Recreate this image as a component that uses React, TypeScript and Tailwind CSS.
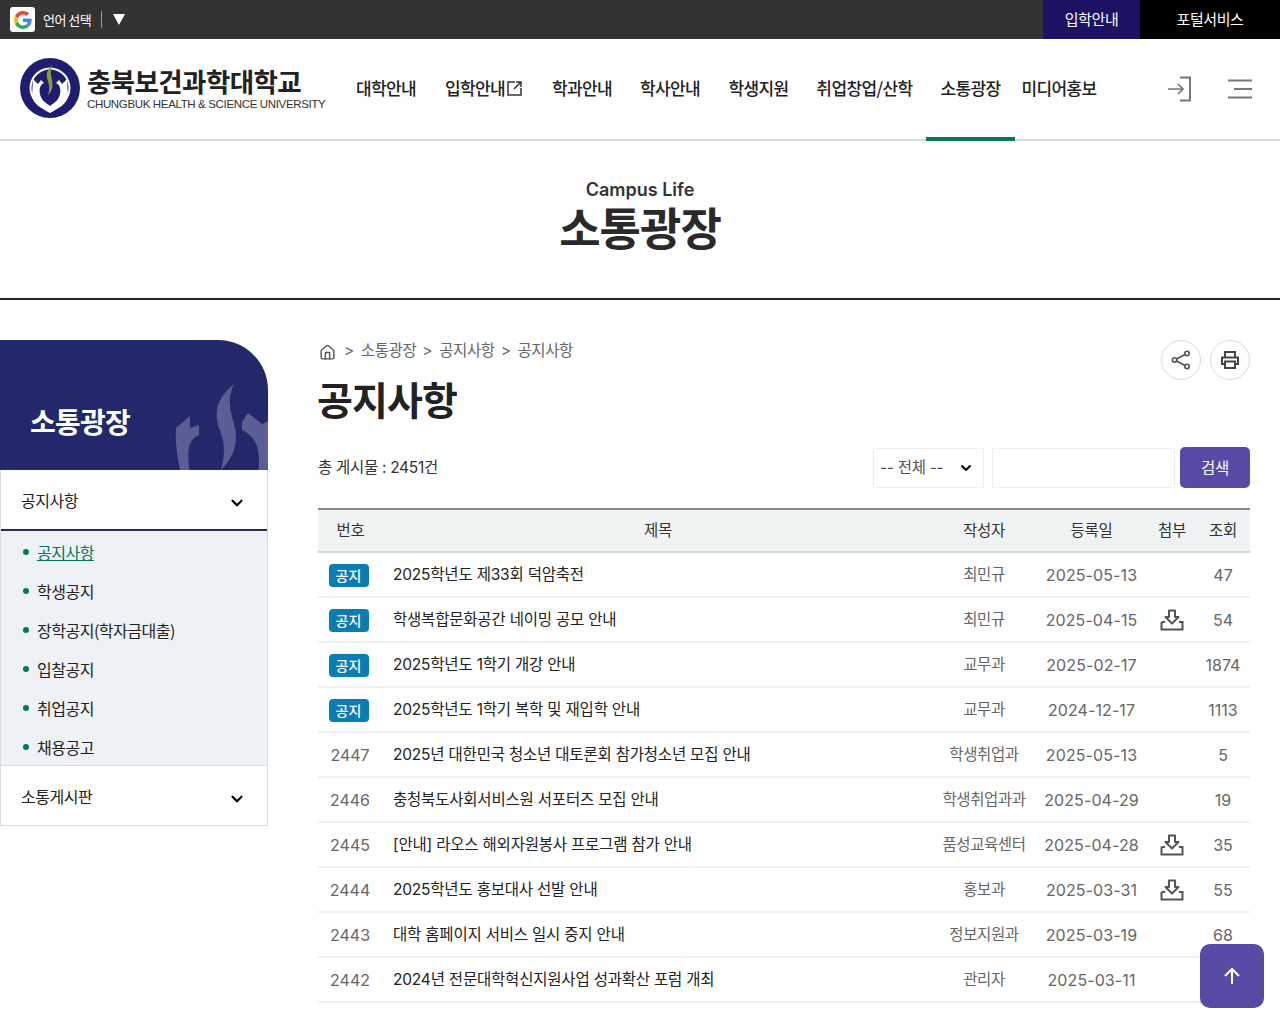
import React from "react";
import { Home, ChevronDown } from "lucide-react";

const font = "font-['Inter','Noto_Sans_CJK_KR',sans-serif]";
const cjk = "font-['Noto_Sans_CJK_KR',sans-serif]";

const nav = [
  { t: "대학안내", w: "w-[88px]" },
  { t: "입학안내", w: "w-[108px]", ext: true },
  { t: "학과안내", w: "w-[88px]" },
  { t: "학사안내", w: "w-[88px]" },
  { t: "학생지원", w: "w-[89px]" },
  { t: "취업창업/산학", w: "w-[123px]" },
  { t: "소통광장", w: "w-[89px]", active: true },
  { t: "미디어홍보", w: "w-[88px]" },
];

const subs = ["공지사항", "학생공지", "장학공지(학자금대출)", "입찰공지", "취업공지", "채용공고"];

const rows: [string, string, string, string, boolean, string][] = [
  ["공지", "2025학년도 제33회 덕암축전", "최민규", "2025-05-13", false, "47"],
  ["공지", "학생복합문화공간 네이밍 공모 안내", "최민규", "2025-04-15", true, "54"],
  ["공지", "2025학년도 1학기 개강 안내", "교무과", "2025-02-17", false, "1874"],
  ["공지", "2025학년도 1학기 복학 및 재입학 안내", "교무과", "2024-12-17", false, "1113"],
  ["2447", "2025년 대한민국 청소년 대토론회 참가청소년 모집 안내", "학생취업과", "2025-05-13", false, "5"],
  ["2446", "충청북도사회서비스원 서포터즈 모집 안내", "학생취업과과", "2025-04-29", false, "19"],
  ["2445", "[안내] 라오스 해외자원봉사 프로그램 참가 안내", "품성교육센터", "2025-04-28", true, "35"],
  ["2444", "2025학년도 홍보대사 선발 안내", "홍보과", "2025-03-31", true, "55"],
  ["2443", "대학 홈페이지 서비스 일시 중지 안내", "정보지원과", "2025-03-19", false, "68"],
  ["2442", "2024년 전문대학혁신지원사업 성과확산 포럼 개최", "관리자", "2025-03-11", false, ""],
];

function Emblem() {
  return (
    <svg width="62" height="62" viewBox="0 0 62 62" className="shrink-0">
      <circle cx="31" cy="31" r="30" fill="#1f1d70" />
      <circle cx="31" cy="31" r="20.5" fill="#fff" />
      <circle cx="31" cy="31" r="18.5" fill="#1f1d70" />
      <path d="M14 22l5 5 3-4 3 3c-4 2-5 6-4 11 1 6 6 9 10 12 4-3 9-6 10-12 1-5 0-9-4-11l3-3 3 4 5-5 1 17c-1 8-9 12-18 17-9-5-17-9-18-17z" fill="#fff" />
      <path d="M24 30c-2 5-1 9 7 14 8-5 9-9 7-14 4 4 3 10-7 16-10-6-11-12-7-16z" fill="#1f1d70" />
      <path d="M33 8c-6 6-6 11-4 16 1 4 2 8 0 14 5-5 5-10 4-15-1-5-2-9 0-15z" fill="#8a9a3a" />
      <text x="31" y="42" textAnchor="middle" fontSize="5.5" fontWeight="700" fill="#1f1d70" fontFamily="'Liberation Sans',sans-serif">CHSU</text>
    </svg>
  );
}

function DownloadIcon() {
  return (
    <svg width="24" height="22" viewBox="0 0 24 22" fill="none" stroke="#555" strokeWidth="2" className="mx-auto">
      <path d="M9 1.5h6v6.5h3.5L12 14.500 5.500 8H9z" strokeLinejoin="round" />
      <path d="M1.500 13v7.500h21V13h-3.500M5 13H1.500" />
    </svg>
  );
}

function GoogleG() {
  return (
    <svg width="18" height="18" viewBox="0 0 48 48">
      <path fill="#EA4335" d="M24 9.500c3.500 0 6.700 1.200 9.200 3.600l6.900-6.900C35.900 2.400 30.500 0 24 0 14.600 0 6.500 5.400 2.600 13.200l8 6.200C12.500 13.700 17.800 9.500 24 9.500z" />
      <path fill="#4285F4" d="M46.900 24.500c0-1.600-.1-3.100-.4-4.500H24v9h12.900c-.6 3-2.200 5.500-4.700 7.200l7.700 6c4.500-4.200 7-10.300 7-17.700z" />
      <path fill="#FBBC05" d="M10.600 28.600c-.5-1.400-.8-3-.8-4.600s.3-3.200.8-4.600l-8-6.200C.9 16.500 0 20.100 0 24s.9 7.500 2.600 10.800z" />
      <path fill="#34A853" d="M24 48c6.500 0 11.900-2.100 15.900-5.800l-7.700-6c-2.200 1.500-5 2.300-8.200 2.300-6.200 0-11.500-4.200-13.400-9.900l-8 6.200C6.500 42.600 14.600 48 24 48z" />
    </svg>
  );
}

export default function App() {
  return (
    <div className={`${font} relative w-[1280px] h-[1024px] overflow-hidden bg-white text-[#222]`}>
      {/* top bar */}
      <div className="flex h-[39px] bg-[#333333] items-center">
        <div className="flex items-center flex-1 pl-[10px]">
          <div className="w-[25px] h-[25px] bg-white rounded-[3px] flex items-center justify-center">
            <GoogleG />
          </div>
          <span className={`${cjk} ml-[8px] text-[13px] text-white tracking-[-0.5px]`}>언어 선택</span>
          <span className="ml-[10px] w-px h-[17px] bg-[#999]" />
          <span className="ml-[11px] w-0 h-0 border-x-[6.5px] border-x-transparent border-t-[11px] border-t-white" />
        </div>
        <div className={`${cjk} w-[97px] h-full bg-[#1c1263] text-white text-[15px] flex items-center justify-center tracking-[-0.4px]`}>입학안내</div>
        <div className={`${cjk} w-[140px] h-full bg-black text-white text-[15px] flex items-center justify-center tracking-[-0.4px]`}>포털서비스</div>
      </div>

      {/* header */}
      <div className="flex h-[102px] border-b-2 border-[#d7dde0]">
        <div className="w-[342px] flex items-center pl-[19px] pb-[2px]">
          <Emblem />
          <div className="ml-[6px] flex flex-col">
            <span className={`${cjk} text-[26.500px] leading-[30px] font-bold text-[#222] tracking-[-0.6px] whitespace-nowrap`}>충북보건과학대학교</span>
            <span className="font-['Liberation_Sans',sans-serif] text-[11.500px] leading-[14px] mt-[1px] text-[#333] tracking-[-0.35px] whitespace-nowrap">CHUNGBUK HEALTH &amp; SCIENCE UNIVERSITY</span>
          </div>
        </div>
        <div className="flex">
          {nav.map((n) => (
            <div
              key={n.t}
              className={`${n.w} ${cjk} h-[102px] flex items-center justify-center text-[17px] font-medium text-[#222] tracking-[-0.6px] whitespace-nowrap border-b-4 -mb-px ${n.active ? "border-[#047857]" : "border-transparent"}`}
            >
              {n.t}
              {n.ext && (
                <svg width="17" height="17" viewBox="0 0 17 17" fill="none" stroke="#333" strokeWidth="1.500" className="ml-[1px]">
                  <path d="M9 2H2v13h13V8" />
                  <path d="M8 9l7-7M10 2h5v5" />
                </svg>
              )}
            </div>
          ))}
        </div>
        <div className="flex-1 flex items-center justify-end pr-[28px]">
          <svg width="26" height="26" viewBox="0 0 26 26" fill="none" stroke="#777" strokeWidth="2" className="mr-[35px]">
            <path d="M13 1.500h10v23H13" />
            <path d="M1 13h15M11 8l5 5-5 5" strokeWidth="1.700" />
          </svg>
          <svg width="24" height="20" viewBox="0 0 24 20" fill="none" stroke="#777" strokeWidth="2.200">
            <path d="M0 1.500h24M6 10h18M0 18.500h24" />
          </svg>
        </div>
      </div>

      {/* title */}
      <div className="h-[159px] border-b-2 border-[#222] flex flex-col items-center pt-[38px]">
        <div className="text-[18px] leading-[22px] font-semibold text-[#333]">Campus Life</div>
        <div className={`${cjk} text-[45px] leading-[54px] font-bold text-[#2a2a2a] -mt-[1px] tracking-[-1px]`}>소통광장</div>
      </div>

      {/* body */}
      <div className="flex pt-[40px] pr-[30px]">
        <aside className="w-[268px] shrink-0">
          <div className="relative h-[130px] bg-[#23286b] rounded-tr-[50px] overflow-hidden flex items-center pl-[30px] pt-[32px]">
            <span className={`${cjk} text-[28px] font-bold text-white tracking-[-0.8px]`}>소통광장</span>
            <svg width="100" height="90" viewBox="0 0 100 90" className="absolute left-[175px] top-[44px]" fill="#5a5e93">
              <path d="M59 0C42 14 38 28 45 46c5 14 5 26 1 40 14-14 18-30 13-46-4-14-7-26 0-40z" />
              <path d="M1 44l14-12 0 12 9-3 0 10c-10 4-13 14-9 39H6C2 72 0 58 1 44z" />
              <path d="M67 38l6-9 14 11 6-3v53H83c3-22 0-36-16-44z" />
            </svg>
          </div>
          <div className="border-x border-b border-[#d7dde0]">
            <div className="h-[61px] flex items-center justify-between pl-[20px] pr-[21px] border-b-2 border-[#23286b]">
              <span className={`${cjk} text-[16px] text-[#222] tracking-[-0.5px]`}>공지사항</span>
              <ChevronDown size={18} strokeWidth={3} className="text-black mt-[6px]" />
            </div>
            <ul className="bg-[#eef1f5] h-[235px] pt-[1px] border-b border-[#d7dde0]">
              {subs.map((s, i) => (
                <li key={s} className="h-[39px] flex items-center pl-[22px]">
                  <span className="w-[6px] h-[6px] rounded-full bg-[#047857] mr-[8px]" />
                  <span className={`${cjk} text-[16px] tracking-[-0.5px] ${i === 0 ? "text-[#047857] underline" : "text-[#222]"}`}>{s}</span>
                </li>
              ))}
            </ul>
            <div className="h-[59px] flex items-center justify-between pl-[20px] pr-[21px]">
              <span className={`${cjk} text-[16px] text-[#222] tracking-[-0.5px]`}>소통게시판</span>
              <ChevronDown size={18} strokeWidth={3} className="text-black mt-[6px]" />
            </div>
          </div>
        </aside>

        <main className="ml-[50px] flex-1 min-w-0">
          <div className="flex justify-between items-start h-[40px]">
            <div className="flex items-center h-[20px] mt-[1px] text-[15.500px] text-[#666] tracking-[-0.4px]">
              <Home size={17} className="ml-[1px] mr-[8px] text-[#555] mt-[2px]" />
              <span>&gt;</span><span className="ml-[7px]">소통광장</span>
              <span className="ml-[6px]">&gt;</span><span className="ml-[7px]">공지사항</span>
              <span className="ml-[6px]">&gt;</span><span className="ml-[7px]">공지사항</span>
            </div>
            <div className="flex gap-[9px]">
              <div className="w-[40px] h-[40px] rounded-full border border-[#d9d9d9] flex items-center justify-center">
                <svg width="20" height="20" viewBox="0 0 20 20" fill="none" stroke="#555" strokeWidth="1.600">
                  <circle cx="16" cy="3.500" r="2.200" /><circle cx="3.500" cy="10" r="2.200" /><circle cx="16" cy="16.500" r="2.200" />
                  <path d="M5.500 9l8.500-4.500M5.500 11l8.500 4.500" />
                </svg>
              </div>
              <div className="w-[40px] h-[40px] rounded-full border border-[#d9d9d9] flex items-center justify-center">
                <svg width="20" height="20" viewBox="0 0 20 20" fill="none" stroke="#444" strokeWidth="2">
                  <path d="M5 7V2h10v5" /><path d="M5 14H2V7.500h16V14h-3" /><path d="M5 11.500h10V18H5z" />
                </svg>
              </div>
            </div>
          </div>
          <h2 className={`${cjk} text-[39px] leading-[48px] font-bold text-[#222] -ml-[1px] -mt-[6px] tracking-[-0.9px]`}>공지사항</h2>
          <div className="flex items-center justify-between h-[41px] mt-[25px]">
            <span className="text-[15.500px] text-[#333] tracking-[-0.3px]">총 게시물 : 2451건</span>
            <div className="flex items-center">
              <div className="w-[111px] h-[40px] border border-[#eeeeee] flex items-center justify-between pl-[6px] pr-[9px] text-[15.500px] text-[#555] tracking-[-0.3px]">
                <span>-- 전체 --</span>
                <ChevronDown size={16} strokeWidth={3} className="text-black" />
              </div>
              <div className="ml-[8px] w-[183px] h-[40px] border border-[#eeeeee]" />
              <button className={`${cjk} ml-[5px] w-[70px] h-[41px] rounded-[5px] bg-[#5a4aa6] text-white text-[15.500px] tracking-[-0.3px]`}>검색</button>
            </div>
          </div>

          <table className="w-[932px] mt-[20px] table-fixed border-collapse text-[16px]">
            <colgroup>
              <col className="w-[65px]" /><col className="w-[550px]" /><col className="w-[102px]" />
              <col className="w-[113px]" /><col className="w-[48px]" /><col className="w-[54px]" />
            </colgroup>
            <thead>
              <tr className="h-[43px] bg-[#f0f3f4] border-t-2 border-b-2 border-t-[#8a8a8a] border-b-[#d5d8da]">
                {["번호", "제목", "작성자", "등록일", "첨부", "조회"].map((h) => (
                  <th key={h} className="font-normal text-[15.500px] text-[#333] tracking-[-0.3px]">{h}</th>
                ))}
              </tr>
            </thead>
            <tbody>
              {rows.map((r) => (
                <tr key={r[1]} className="h-[45px] border-b-2 border-[#f0f0f0]">
                  <td className="text-center text-[#666]">
                    {r[0] === "공지" ? (
                      <span className="inline-block align-middle w-[40px] h-[23px] leading-[23px] rounded-[4px] bg-[#0b7db5] text-white text-[14px] font-medium -ml-[4px]">공지</span>
                    ) : (
                      <span className="-ml-[1px]">{r[0]}</span>
                    )}
                  </td>
                  <td className="pl-[10px] text-[#222] text-[15.500px] tracking-[-0.2px] whitespace-nowrap">{r[1]}</td>
                  <td className="text-center text-[#666] text-[15.500px] tracking-[-0.4px] whitespace-nowrap">{r[2]}</td>
                  <td className="text-center text-[#666] tracking-[0.1px]">{r[3]}</td>
                  <td className="text-center">{r[4] && <DownloadIcon />}</td>
                  <td className="text-center text-[#666]">{r[5]}</td>
                </tr>
              ))}
            </tbody>
          </table>
        </main>
      </div>

      {/* floating top button */}
      <button className="absolute left-[1200px] top-[944px] w-[64px] h-[64px] rounded-[10px] bg-[#5a4aa6] flex items-center justify-center">
        <svg width="18" height="18" viewBox="0 0 18 18" fill="none" stroke="#fff" strokeWidth="2"><path d="M9 17V2M2 9l7-7 7 7" /></svg>
      </button>
    </div>
  );
}
